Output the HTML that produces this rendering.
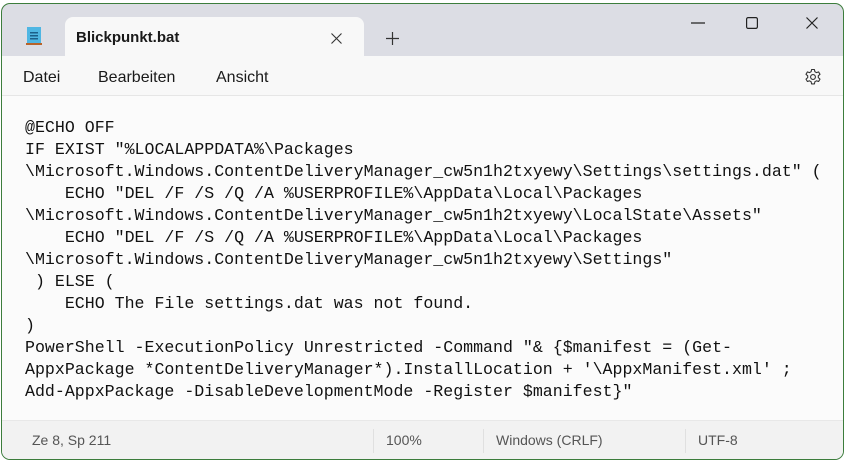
<!DOCTYPE html>
<html><head><style>
*{margin:0;padding:0;box-sizing:border-box}
body{width:846px;height:462px;background:#fff;overflow:hidden;font-family:"Segoe UI","Liberation Sans",sans-serif}
.win{position:absolute;left:1px;top:3px;width:843px;height:457px;border:1px solid #3c7d3c;border-radius:9px;overflow:hidden;background:#dcdde4}
.tab{position:absolute;left:63px;top:13px;width:299px;height:42px;background:#f8f8f8;border-radius:8px 8px 0 0}
.menu{position:absolute;left:0;top:52px;width:100%;height:40px;background:#f8f8f8;border-bottom:1px solid #e6e6e6}
.ed{position:absolute;left:0;top:92px;width:100%;height:324px;background:#fbfbfb}
.st{position:absolute;left:0;top:416px;width:100%;height:41px;background:#f2f2f2;border-top:1px solid #e8e8e8;font-size:14px;color:#555}
.st span{position:absolute;top:11px}
.sep{position:absolute;top:8px;width:1px;height:24px;background:#e0e0e0}
pre{position:absolute;left:23px;top:21px;font-family:"Liberation Mono",monospace;font-size:16.6px;line-height:22px;color:#111}
.m{position:absolute;top:13px;font-size:16px;color:#1a1a1a}
</style></head><body>
<div class="win">
<svg style="position:absolute;left:24px;top:22px" width="16" height="20"><rect x="1" y="1" width="14" height="16" fill="#4fb6e3"/><rect x="0" y="17" width="16" height="2" fill="#b8632a"/><rect x="4" y="6" width="8" height="1.5" fill="#1c5f8a"/><rect x="4" y="9" width="8" height="1.5" fill="#1c5f8a"/><rect x="4" y="12" width="8" height="1.5" fill="#1c5f8a"/></svg>
<div class="tab"><span style="position:absolute;left:11px;top:12px;font-size:15px;font-weight:bold;color:#1a1a1a">Blickpunkt.bat</span>
<svg style="position:absolute;left:266px;top:16px" width="11" height="11"><path d="M0.5 0.5L10.5 10.5M10.5 0.5L0.5 10.5" stroke="#333" stroke-width="1.1"/></svg></div>
<svg style="position:absolute;left:384px;top:28px" width="13" height="13"><path d="M6.5 0V13M0 6.5H13" stroke="#333" stroke-width="1.2"/></svg>
<svg style="position:absolute;left:689px;top:18px" width="14" height="3"><path d="M0 1H14" stroke="#222" stroke-width="1.2"/></svg>
<svg style="position:absolute;left:744px;top:13px" width="12" height="12"><rect x="0.6" y="0.6" width="10.8" height="10.8" rx="1.5" fill="none" stroke="#222" stroke-width="1.2"/></svg>
<svg style="position:absolute;left:804px;top:13px" width="12" height="12"><path d="M0.5 0.5L11.5 11.5M11.5 0.5L0.5 11.5" stroke="#222" stroke-width="1.2"/></svg>
<div class="menu">
<span class="m" style="left:21px">Datei</span>
<span class="m" style="left:96px">Bearbeiten</span>
<span class="m" style="left:214px">Ansicht</span>
<svg style="position:absolute;left:802px;top:12px" width="18" height="18" viewBox="0 0 18 18"><path d="M7.6 1.5h2.8l.5 2.2 1.6.9 2.1-.7 1.4 2.4-1.7 1.5v1.8l1.7 1.5-1.4 2.4-2.1-.7-1.6.9-.5 2.2H7.6l-.5-2.2-1.6-.9-2.1.7-1.4-2.4 1.7-1.5V7.8L2 6.3l1.4-2.4 2.1.7 1.6-.9z" fill="none" stroke="#333" stroke-width="1.1" stroke-linejoin="round"/><circle cx="9" cy="9" r="2.4" fill="none" stroke="#333" stroke-width="1.1"/></svg>
</div>
<div class="ed"><pre>@ECHO OFF
IF EXIST "%LOCALAPPDATA%\Packages
\Microsoft.Windows.ContentDeliveryManager_cw5n1h2txyewy\Settings\settings.dat" (
    ECHO "DEL /F /S /Q /A %USERPROFILE%\AppData\Local\Packages
\Microsoft.Windows.ContentDeliveryManager_cw5n1h2txyewy\LocalState\Assets"
    ECHO "DEL /F /S /Q /A %USERPROFILE%\AppData\Local\Packages
\Microsoft.Windows.ContentDeliveryManager_cw5n1h2txyewy\Settings"
 ) ELSE (
    ECHO The File settings.dat was not found.
)
PowerShell -ExecutionPolicy Unrestricted -Command "&amp; {$manifest = (Get-
AppxPackage *ContentDeliveryManager*).InstallLocation + '\AppxManifest.xml' ;
Add-AppxPackage -DisableDevelopmentMode -Register $manifest}"</pre></div>
<div class="st">
<span style="left:30px">Ze 8, Sp 211</span>
<div class="sep" style="left:371px"></div>
<span style="left:384px">100%</span>
<div class="sep" style="left:481px"></div>
<span style="left:494px">Windows (CRLF)</span>
<div class="sep" style="left:683px"></div>
<span style="left:696px">UTF-8</span>
</div>
</div>
</body></html>
